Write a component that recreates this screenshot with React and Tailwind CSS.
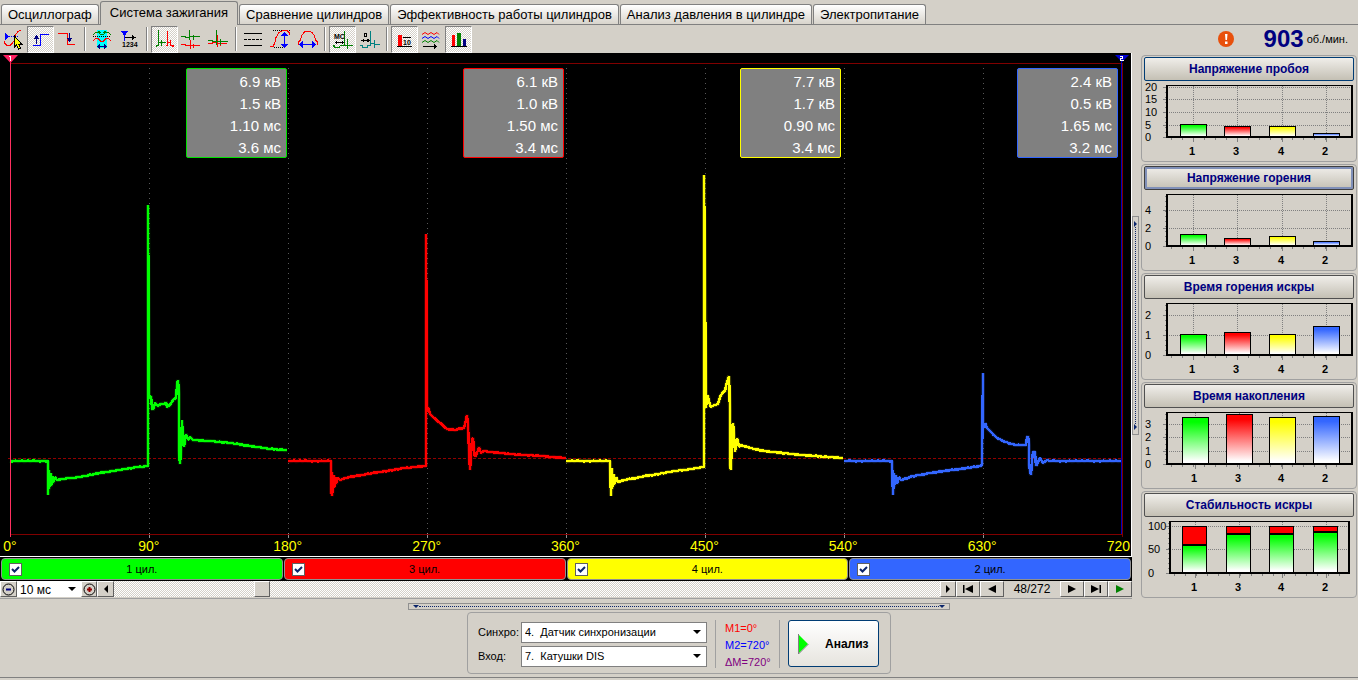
import { useState } from 'react';
import clsx from 'clsx';

const tabs = [
  'Осциллограф',
  'Система зажигания',
  'Сравнение цилиндров',
  'Эффективность работы цилиндров',
  'Анализ давления в цилиндре',
  'Электропитание',
];

const cylinders = [
  { id: 1, bar: 'bg-[#00ff00]', border: 'border-[#00e000]', stats: ['6.9 кВ', '1.5 кВ', '1.10 мс', '3.6 мс'] },
  { id: 3, bar: 'bg-[#ff0000]', border: 'border-[#ff0000]', stats: ['6.1 кВ', '1.0 кВ', '1.50 мс', '3.4 мс'] },
  { id: 4, bar: 'bg-[#ffff00]', border: 'border-[#ffff00]', stats: ['7.7 кВ', '1.7 кВ', '0.90 мс', '3.4 мс'] },
  { id: 2, bar: 'bg-[#3366ff]', border: 'border-[#3366ff]', stats: ['2.4 кВ', '0.5 кВ', '1.65 мс', '3.2 мс'] },
];

const colors = ['#00ff00', '#ff0000', '#ffff00', '#3366ff'];

// adds sampling noise to the flat parts of a trace
function noisy(points) {
  const src = points.split(' ').map(p => p.split(',').map(Number));
  const out = [src[0]];
  for (let i = 1; i < src.length; i++) {
    const [x0, y0] = src[i - 1];
    const [x1, y1] = src[i];
    for (let x = x0 + 2; x < x1 - 1; x += 2) {
      const n = ((x * 7919) % 17) / 17 - 0.5;
      out.push([x, y0 + ((y1 - y0) * (x - x0)) / (x1 - x0) + n]);
    }
    out.push(src[i]);
  }
  return out.map(p => p.join(',')).join(' ');
}

const waves = [
  '10,461 48,461 48,495 49,470 49,489 51,473 51,486 53,476 53,483 55,477 57,480 62,479 80,477 100,473 125,469 138,467 148,466 148,205 149,398 151,396 152,408 153,410 155,403 158,406 161,404 165,404 166,402 167,407 170,405 173,400 176,398 177,386 178,380 179,394 179,450 180,464 181,450 182,420 183,440 184,447 186,434 188,440 190,437 193,440 210,441 230,443 250,446 270,449 287,450',
  '288,461 331,461 331,494 332,472 332,496 334,475 334,488 336,477 336,484 338,478 340,480 345,478 362,475 380,472 405,468 426,466 426,234 427,412 428,407 430,414 433,417 440,423 447,429 455,430 464,428 466,420 467,415 468,425 469,450 470,470 471,455 472,439 473,438 474,450 475,457 477,453 479,447 481,453 484,451 490,452 510,454 540,456 566,458',
  '566,461 610,461 611,496 612,468 612,489 614,474 614,485 616,477 618,482 625,480 640,477 670,472 704,467 704,175 706,408 707,396 708,396 709,402 711,407 715,405 718,404 720,397 723,392 725,391 727,382 729,376 730,410 730,465 731,470 732,428 733,423 734,435 735,452 737,438 739,447 741,445 750,448 765,451 800,455 843,458',
  '844,461 892,461 893,495 894,473 894,487 896,475 897,484 899,477 901,480 910,477 930,473 960,469 981,466 982,464 983,373 983,428 985,423 987,428 991,432 996,437 1003,441 1015,445 1026,445 1027,438 1028,436 1029,445 1029,465 1031,475 1032,460 1033,452 1035,452 1036,466 1038,462 1040,458 1043,463 1047,460 1050,461 1121,461',
].map(noisy);

const degrees = ['0°', '90°', '180°', '270°', '360°', '450°', '540°', '630°'];

// pixel rows are counted from the top of the 76px high plot
const charts = [
  { title: 'Напряжение пробоя', ticks: [[20, 5], [15, 17], [10, 30], [5, 43], [0, 55]], tops: [42, 44, 44, 51], xs: [36, 80, 125, 169], ring: 'border-[#003c74]' },
  { title: 'Напряжение горения', ticks: [[4, 19], [2, 37], [0, 55]], tops: [43, 47, 45, 50], xs: [36, 80, 125, 169], ring: 'border-[#404040] ring-2 ring-inset ring-[#8090b8]' },
  { title: 'Время горения искры', ticks: [[2, 15], [1, 35], [0, 55]], tops: [34, 32, 34, 26], xs: [36, 80, 125, 169], ring: 'border-[#505050]' },
  { title: 'Время накопления', ticks: [[3, 15], [2, 28], [1, 42], [0, 55]], tops: [8, 5, 8, 7], xs: [38, 82, 125, 169], ring: 'border-[#505050]' },
  { title: 'Стабильность искры', ticks: [[100, 8], [50, 31], [0, 55]], tops: [26, 15, 15, 13], xs: [38, 82, 125, 169], stacked: true, ring: 'border-[#505050]' },
];

const hatch = 'bg-[repeating-conic-gradient(#ffffff_0_25%,#d4d0c8_0_50%)] bg-[length:2px_2px]';
const raised = 'border border-t-white border-l-white border-r-[#606060] border-b-[#606060] bg-[#d4d0c8]';

function Tool({ label, pressed, children }) {
  return (
    <button
      type="button"
      aria-label={label}
      aria-pressed={!!pressed}
      className={clsx('size-[27px] shrink-0', pressed && 'border border-t-[#808080] border-l-[#808080] border-r-white border-b-white', pressed && hatch)}
    >
      <svg
        viewBox={pressed ? '1 1 25 25' : '0 0 27 27'}
        className="block size-full"
        fill="none"
        strokeWidth="1"
        shapeRendering="crispEdges"
      >
        {children}
      </svg>
    </button>
  );
}

function Sep() {
  return <div className="mx-[3px] h-6 w-[2px] shrink-0 border-l border-[#808080] bg-white" />;
}

function Toolbar() {
  return (
    <div className="flex items-center">
      <Tool label="Курсор">
        <path d="M5 7v7l4-3.500z" fill="#00f" />
        <path d="M9 10.500h10" stroke="#00f" strokeDasharray="1 1" />
        <path d="M4.500 15v2l2 2h4l2-2 2-3 1-5 2-3 3-2" stroke="#f00" />
        <path d="M14.500 10v11l2-2 2 4 2-1-2-4h3z" fill="#ff0" stroke="#000" />
      </Tool>
      <Tool label="Фронт вверх" pressed>
        <path d="M6 19.500h7.500v-11h8" stroke="#00f" />
        <path d="M9.500 9v9" stroke="#000080" />
        <path d="M6.500 13l3-4 3 4z" fill="#000080" />
      </Tool>
      <Tool label="Фронт вниз">
        <path d="M4 7.500h9.500v11h7.500" stroke="#f00" />
        <path d="M15.500 7v9" stroke="#000080" />
        <path d="M12.500 12l3 4 3-4z" fill="#000080" />
      </Tool>
      <Sep />
      <Tool label="Усреднение">
        <path d="M8 4h10v18H8z" fill="#0ff" />
        <path d="M4 8.500l3-2h2l3 2h2l3-2h2l3 2M9 5l3 2M17 5l-3 2" stroke="#008000" />
        <path d="M4 10.500h18" stroke="#000" strokeDasharray="1 1" />
        <path d="M4 14.500l3-2h2l3 3h2l3-3h2l3 2" stroke="#f00" />
        <path d="M9 20.500h8M11 18.500l-2 2 2 2M15 18.500l2 2-2 2" stroke="#000080" />
      </Tool>
      <Tool label="Порядок цилиндров">
        <path d="M5 5h7l-3.500 4z" fill="#00f" stroke="#00f" />
        <path d="M8.500 6v9" stroke="#00f" />
        <path d="M9 11.500h8" stroke="#000" />
        <path d="M16 9l4 2.500-4 2.500z" fill="#000" />
        <text x="6" y="21" className="font-['Liberation_Sans'] text-[7px] font-bold" fill="#000">1234</text>
      </Tool>
      <Sep />
      <Tool label="Парад" pressed>
        <path d="M5.500 21v-2h2v-15 12.500h3v-3 6 -3h4" stroke="#008000" />
        <path d="M14.500 19.500h2v-15 12h3v-3 6h1l2 1v-2" stroke="#f00" />
      </Tool>
      <Tool label="Растр">
        <path d="M3 10.500h4l1 1h3.500v-8 10 -3h4v-2 5 -3h6" stroke="#008000" />
        <path d="M3 18.500h4l1 1h4.500v-6 9 -3h3v-2 4 -2h6" stroke="#f00" />
      </Tool>
      <Tool label="Наложение">
        <path d="M3 17.500h4l1-1h4.500v-8 12 -3h3v-3 5 -2h6" stroke="#f00" />
        <path d="M3 14.500h4l1 1h3.500v-12 15 -3h4v-3 6 -3h7" stroke="#008000" />
      </Tool>
      <Sep />
      <Tool label="Сетка">
        <path d="M4 7.500h18M4 19.500h18" stroke="#000" />
        <path d="M4 13.500h18" stroke="#000" strokeDasharray="3 1" />
      </Tool>
      <Tool label="Амплитуда">
        <path d="M6 4.500h17M7 21.500h9" stroke="#000" strokeDasharray="1 1" />
        <path d="M3 20.500h3l2-4 1-5 3-5 4-2h4l2 2v2" stroke="#f00" />
        <path d="M17.500 7v13" stroke="#00f" />
        <path d="M14 10l3.500-4 3.500 4zM14 18l3.500 4 3.500-4z" fill="#00f" />
      </Tool>
      <Tool label="Период">
        <path d="M4.500 19v-3l2-2 1-4 3-4 3-1h2l3 2 2 3 1 4 2 2v3" stroke="#f00" />
        <path d="M7 18.500h13" stroke="#00f" />
        <path d="M9 15v7l-4-3.500zM18 15v7l4-3.500z" fill="#00f" />
      </Tool>
      <Sep />
      <Tool label="Маркеры МС" pressed>
        <path d="M4.500 21v-2h1v2h5l1-2h4v-14 14h3v-6 10 -4h5" stroke="#008000" />
        <path d="M7 16.500h7" stroke="#000" />
        <path d="M8 14.500v4l-2-2zM13 14.500v4l2-2z" fill="#000" />
        <text x="5" y="13" className="font-['Liberation_Sans'] text-[7px] font-bold" fill="#000">МС</text>
      </Tool>
      <Tool label="Маркеры угла">
        <path d="M4 19.500h2v2h5l1-2h2.500v-15 13h4v-4 8 -3h5" stroke="#008080" />
        <path d="M6 14.500h7" stroke="#000" />
        <path d="M8 12.500v4l-3-2zM11 12.500v4l3-2z" fill="#000" />
        <path d="M8.500 7.500h2v3h-2z" stroke="#000" />
      </Tool>
      <Sep />
      <Tool label="Среднее" pressed>
        <path d="M7 9h4v11H7z" fill="#f00" />
        <path d="M6 20.500h15M12 11.500h8" stroke="#000" />
        <text x="12" y="19" className="font-['Liberation_Sans'] text-[7px] font-bold" fill="#000">10</text>
      </Tool>
      <Tool label="История">
        <g shapeRendering="auto">
          <path d="M4 8.500l3-2 3 2 3-2 3 2 3-2 2 2" stroke="#f00" />
          <path d="M4 12.500l3-2 3 2 3-2 3 2 3-2 2 2" stroke="#00f" />
          <path d="M4 16.500l3-2 3 2 3-2 3 2 3-2 2 2" stroke="#008000" />
        </g>
        <path d="M5 20.500h12" stroke="#000" />
        <path d="M16 18l3 2.500-3 2.500z" fill="#000" />
      </Tool>
      <Tool label="Гистограммы" pressed>
        <path d="M7 9h3v11H7z" fill="#f00" />
        <path d="M12 7h4v13h-4z" fill="#008000" />
        <path d="M18 13h3v7h-3z" fill="#000080" />
        <path d="M6 20.500h16" stroke="#000" />
      </Tool>
    </div>
  );
}

function Scope() {
  return (
    <div className="relative overflow-hidden border-r border-b border-white bg-black">
      <svg viewBox="0 53 1131 503" preserveAspectRatio="none" className="block h-[503px] w-full" fill="none">
        <g shapeRendering="crispEdges">
          {[1, 2, 3, 4, 5, 6, 7].map(i => (
            <g key={i}>
              <line x1={10.5 + i * 139} x2={10.5 + i * 139} y1="68" y2="534" stroke="#585858" strokeDasharray="1 4" />
              <line x1={10.5 + i * 139} x2={10.5 + i * 139} y1="533" y2="538" stroke="#909090" />
            </g>
          ))}
          <path d="M10 63.500H1122M10 534.500H1122" stroke="#800000" />
          <path d="M8 458.500H1122" stroke="#900000" strokeDasharray="3 2" />
          <path d="M1121.500 60V534" stroke="#0000c0" />
          <path d="M1122.500 63V537" stroke="#800000" />
        </g>
        {waves.map((points, i) => (
          <g key={i} stroke={colors[i]} strokeLinejoin="bevel">
            <polyline points={points} strokeWidth="4" opacity="0.25" />
            <polyline points={points} strokeWidth="2.5" shapeRendering="crispEdges" />
          </g>
        ))}
        <path d="M10.500 60V537" stroke="#ff3060" shapeRendering="crispEdges" />
        <path d="M3 55h15l-7.500 8z" fill="#ff2060" />
        <path d="M1115 55h14l-7 7z" fill="#0000d0" />
        <path d="M9 56.500h1.500v4M1120 56.500h2.500v2h-2v2h3" stroke="#fff" shapeRendering="crispEdges" />
      </svg>
      <div className="absolute top-[15px] right-[13px] left-[10px] grid grid-cols-4">
        {cylinders.map(c => (
          <div key={c.id} className="flex justify-end">
            <div className={clsx('h-[90px] w-[101px] rounded-xs border bg-[#808080] px-[5px] pt-[2px] text-right text-[15px] leading-[22px] text-white', c.border)}>
              {c.stats.map(s => <p key={s}>{s}</p>)}
            </div>
          </div>
        ))}
      </div>
      <div className="absolute inset-x-[10px] bottom-px grid grid-cols-8 text-[14px] leading-[18px] text-[#ffff00]">
        {degrees.map(d => (
          <span key={d} className="flex w-0 justify-center">{d}</span>
        ))}
      </div>
      <span className="absolute right-px bottom-px text-[14px] leading-[18px] text-[#ffff00]">720</span>
    </div>
  );
}

function CylinderBar() {
  const [enabled, setEnabled] = useState({ 1: true, 2: true, 3: true, 4: true });

  return (
    <div className="grid h-6 grid-cols-4 gap-px bg-black px-px py-px">
      {cylinders.map(c => (
        <label key={c.id} className={clsx('relative flex items-center justify-center rounded-[4px] border border-[#909090] text-[11px] text-black', c.bar)}>
          <span className="absolute left-[7px] grid size-[13px] place-items-center">
            <input
              type="checkbox"
              checked={enabled[c.id]}
              onChange={e => setEnabled({ ...enabled, [c.id]: e.target.checked })}
              className="col-start-1 row-start-1 size-[13px] appearance-none border border-[#606060] bg-white"
            />
            {enabled[c.id] && (
              <svg viewBox="0 0 9 9" className="pointer-events-none col-start-1 row-start-1 size-[9px]" fill="none" stroke="#0a246a" strokeWidth="2">
                <path d="M1 4l2.500 2.500L8 2" />
              </svg>
            )}
          </span>
          {c.id} цил.
        </label>
      ))}
    </div>
  );
}

function ArrowButton({ label, d, width = 'w-6', color = '#000000' }) {
  return (
    <button type="button" aria-label={label} className={clsx('grid h-4 shrink-0 place-items-center', raised, width)}>
      <svg viewBox="0 0 12 8" className="h-2 w-3" fill={color}>
        <path d={d} />
      </svg>
    </button>
  );
}

function Select({ id, label, options, className }) {
  return (
    <div className={clsx('relative', className)}>
      <select id={id} aria-label={label} className="block size-full appearance-none bg-white pl-[3px] text-black outline-none">
        {options.map(o => <option key={o}>{o}</option>)}
      </select>
      <svg viewBox="0 0 8 4" className="pointer-events-none absolute top-1/2 right-[5px] h-1 w-2 -translate-y-1/2">
        <path d="M0 0h8L4 4z" />
      </svg>
    </div>
  );
}

function ScrollRow() {
  const [frame, setFrame] = useState(48);

  return (
    <div className="flex h-[18px] items-center border-b border-[#a0a0a0] pb-px">
      <button type="button" aria-label="Уменьшить" className={clsx('grid h-4 w-[17px] shrink-0 place-items-center', raised)}>
        <svg viewBox="0 0 13 13" className="size-[13px]" fill="none" stroke="#000">
          <circle cx="6.500" cy="6.500" r="5.500" />
          <path d="M4 6.500h5" stroke="#000080" strokeWidth="2" />
        </svg>
      </button>
      <Select label="Развёртка" options={['10 мс']} className="h-4 w-16 shrink-0 text-[12px]" />
      <button type="button" aria-label="Увеличить" className={clsx('grid h-4 w-4 shrink-0 place-items-center', raised)}>
        <svg viewBox="0 0 13 13" className="size-[13px]" fill="none" stroke="#000">
          <circle cx="6.500" cy="6.500" r="5.500" />
          <path d="M4 6.500h5M6.500 4v5" stroke="#900000" strokeWidth="2" />
        </svg>
      </button>
      <ArrowButton label="Прокрутить назад" width="w-[17px]" d="M8 0v8L4 4z" />
      <input
        type="range"
        aria-label="Кадр"
        min="1"
        max="272"
        value={frame}
        onChange={e => setFrame(Number(e.target.value))}
        className={clsx(
          'h-4 min-w-0 flex-1 appearance-none',
          hatch,
          '[&::-webkit-slider-thumb]:h-4 [&::-webkit-slider-thumb]:w-4 [&::-webkit-slider-thumb]:appearance-none [&::-webkit-slider-thumb]:border [&::-webkit-slider-thumb]:border-t-white [&::-webkit-slider-thumb]:border-l-white [&::-webkit-slider-thumb]:border-r-[#606060] [&::-webkit-slider-thumb]:border-b-[#606060] [&::-webkit-slider-thumb]:bg-[#d4d0c8]'
        )}
      />
      <ArrowButton label="Прокрутить вперёд" width="w-4" d="M4 0v8l4-4z" />
      <ArrowButton label="Первый кадр" d="M1 0h1.500v8H1zM11 0v8L3 4z" />
      <ArrowButton label="Предыдущий кадр" d="M10 0v8L2 4z" />
      <span className="w-14 text-center text-[12px] leading-4">{frame}/272</span>
      <ArrowButton label="Следующий кадр" d="M2 0v8l8-4z" />
      <ArrowButton label="Последний кадр" d="M1 0v8l8-4zM9.500 0H11v8H9.500z" />
      <ArrowButton label="Воспроизвести" d="M2 0v8l8-4z" color="#008000" />
    </div>
  );
}

function BarChart({ chart, index }) {
  const left = chart.stacked ? 26 : 23;
  const right = chart.stacked ? 205 : 208;
  const w = chart.stacked ? 24 : 26;

  return (
    <svg viewBox="0 0 210 76" className="block w-full" shapeRendering="crispEdges" role="img" aria-label={chart.title}>
      <defs>
        {colors.map((c, i) => (
          <linearGradient key={c} id={`bar-${index}-${i}`} x1="0" y1="0" x2="0" y2="1">
            <stop offset="0.1" stopColor={c} />
            <stop offset="0.95" stopColor="#ffffff" />
          </linearGradient>
        ))}
      </defs>
      {chart.ticks.map(([value, y]) => (
        <g key={value}>
          <line x1={left} x2={right} y1={y + 0.5} y2={y + 0.5} stroke="#808080" strokeDasharray="1 1" />
          <line x1={left - 4} x2={left} y1={y + 0.5} y2={y + 0.5} stroke="#808080" />
          <text x={chart.stacked ? 4 : 1} y={y + 4} className="text-[11px]">{value}</text>
        </g>
      ))}
      {[0, 1, 2, 3, 4, 5, 6, 7, 8, 9, 10].map(i => (
        <line key={i} x1={left - 2} x2={left} y1={5.5 + i * 5} y2={5.5 + i * 5} stroke="#808080" />
      ))}
      {[0, 1, 2, 3, 4, 5, 6, 7, 8, 9, 10, 11, 12, 13, 14, 15].map(i => (
        <line key={i} x1={left + 4.5 + i * 11} x2={left + 4.5 + i * 11} y1="55" y2="58" stroke="#808080" />
      ))}
      {chart.xs.map((x, i) => (
        <g key={x}>
          <line x1={x + 13.5} x2={x + 13.5} y1="4" y2="55" stroke="#808080" strokeDasharray="1 1" />
          <line x1={x + 13.5} x2={x + 13.5} y1="55" y2="60" stroke="#808080" />
          {chart.stacked && <rect x={x + 0.5} y="8.500" width={w} height={chart.tops[i] - 8} fill="#ff0000" stroke="#000000" />}
          <rect
            x={x + 0.5}
            y={chart.tops[i] + 0.5}
            width={w}
            height={54 - chart.tops[i]}
            fill={`url(#bar-${index}-${chart.stacked ? 0 : i})`}
            stroke="#000000"
          />
          {chart.stacked && <rect x={x} y={chart.tops[i]} width={w + 1} height="2" />}
          <text x={x + 12} y="73" textAnchor="middle" className="text-[11px] font-bold">{cylinders[i].id}</text>
        </g>
      ))}
      <path d={`M${left} 3.500H${right}`} stroke="#000000" />
      <path d={`M${left} 3V55H${right}V3`} fill="none" stroke="#000000" strokeWidth="2" />
    </svg>
  );
}

function Sidebar() {
  return (
    <div className="flex w-[217px] shrink-0 flex-col gap-[2px] pt-[2px] pr-px">
      {charts.map((chart, i) => (
        <section key={chart.title} className="rounded-[4px] border border-[#a0a0a0] px-[2px] pt-px pb-[3px]">
          <button
            type="button"
            className={clsx('block h-6 w-full rounded-xs border bg-linear-to-b from-[#f0eeea] to-[#c4c0b4] text-[12px] font-bold text-[#000080]', chart.ring)}
          >
            {chart.title}
          </button>
          <div className="pt-px">
            <BarChart chart={chart} index={i} />
          </div>
        </section>
      ))}
    </div>
  );
}

function AnalysisPanel() {
  return (
    <div className="mx-auto flex h-[62px] w-[424px] rounded-[4px] border border-[#a0a0a0] pt-[7px] pr-[10px] pl-[10px] text-[11px]">
      <div className="grid shrink-0 grid-cols-[43px_186px] grid-rows-[24px_24px] items-center">
        <label htmlFor="sync">Синхро:</label>
        <Select id="sync" options={['4.\u00a0\u00a0Датчик синхронизации']} className="h-[21px] border border-[#808080]" />
        <label htmlFor="input">Вход:</label>
        <Select id="input" options={['7.\u00a0\u00a0Катушки DIS']} className="h-[21px] border border-[#808080]" />
      </div>
      <div className="mx-[8px] h-[48px] w-[65px] border-x border-[#a0a0a0] pl-[9px] leading-[17px]">
        <p className="text-[#ff0000]">M1=0°</p>
        <p className="text-[#0000ff]">M2=720°</p>
        <p className="text-[#800080]">ΔM=720°</p>
      </div>
      <button
        type="button"
        className="flex h-[47px] w-[91px] shrink-0 items-center rounded-[3px] border border-[#003c74] bg-linear-to-b from-white to-[#e6e4de] pl-[9px] text-[12px] font-bold"
      >
        <svg viewBox="0 0 11 20" className="h-5 w-[11px]">
          <path d="M1 1v18l9-9z" fill="#00ff00" />
          <path d="M0.500 0v20l10-10" fill="none" stroke="#808080" />
        </svg>
        <span className="pl-4">Анализ</span>
      </button>
    </div>
  );
}

export default function App() {
  const [active, setActive] = useState(1);

  return (
    <div className="flex min-h-screen flex-col bg-[#d4d0c8] font-['Liberation_Sans',Arial,sans-serif] text-black">
      <div role="tablist" className="flex h-[25px] items-end border-b border-[#808080] pt-[2px] pl-px">
        {tabs.map((tab, i) => (
          <button
            key={tab}
            type="button"
            role="tab"
            aria-selected={i === active}
            onClick={() => setActive(i)}
            className={clsx(
              'mr-px rounded-t-[3px] border border-b-0 border-[#808080] text-[13px] whitespace-nowrap',
              i === active ? '-mb-px h-6 bg-[#d4d0c8] px-[9px] pb-[2px]' : 'h-5 bg-linear-to-b from-white to-[#d8d4cc] px-[6px]'
            )}
          >
            {tab}
          </button>
        ))}
      </div>

      <div className="flex h-7 items-center justify-between pr-[10px]">
        <Toolbar />
        <div className="flex items-center">
          <svg viewBox="0 0 16 16" className="mr-[30px] size-4">
            <circle cx="8" cy="8" r="8" fill="#e8500c" />
            <path d="M7 3h2.500L9 9H7.500zM7 10.500h2.500V13H7z" fill="#fff" />
          </svg>
          <span className="text-[24px] leading-7 font-bold text-[#000080]">903</span>
          <span className="pl-[3px] text-[11px]">об./мин.</span>
        </div>
      </div>

      <div className="flex">
        <div className="min-w-0 flex-1">
          <Scope />
          <CylinderBar />
          <ScrollRow />
        </div>
        <div className="flex w-[9px] shrink-0 items-center pb-[2px]">
          <div className="flex h-[219px] w-[7px] flex-col items-center justify-between border border-[#909090] py-1">
            <svg viewBox="0 0 3 6" className="h-[6px] w-[3px]"><path d="M0 0v6l3-3z" fill="#0a246a" /></svg>
            <div className="w-0 flex-1 border-l border-dotted border-[#0a246a]" />
            <svg viewBox="0 0 3 6" className="h-[6px] w-[3px]"><path d="M0 0v6l3-3z" fill="#0a246a" /></svg>
          </div>
        </div>
        <Sidebar />
      </div>

      <div className="mx-auto mt-1 flex h-[7px] w-[542px] items-center border border-[#909090] px-1">
        <svg viewBox="0 0 6 3" className="h-[3px] w-[6px]"><path d="M0 0h6L3 3z" fill="#0a246a" /></svg>
        <div className="h-0 flex-1 border-t border-dotted border-[#0a246a]" />
        <svg viewBox="0 0 6 3" className="h-[3px] w-[6px]"><path d="M0 0h6L3 3z" fill="#0a246a" /></svg>
      </div>

      <div className="border-b border-[#808080] pt-[2px] pb-[3px]">
        <AnalysisPanel />
      </div>
    </div>
  );
}
